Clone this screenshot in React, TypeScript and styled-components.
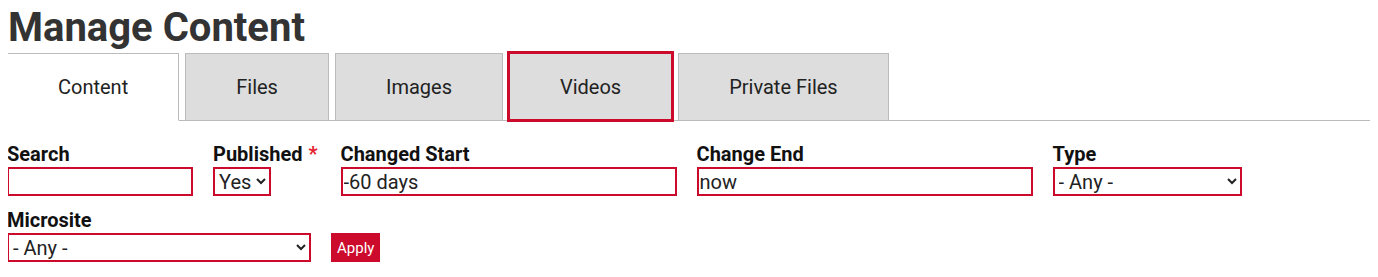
import React from "react";
import styled, { createGlobalStyle } from "styled-components";

const RED = "#cc0a2c";

const Global = createGlobalStyle`
  body {
    margin: 8px;
    background: #fff;
    font-family: Roboto, "Liberation Sans", Arial, sans-serif;
    color: #111;
  }
`;

const Title = styled.h1`
  margin: 0 0 5px;
  font-size: 40px;
  line-height: 40px;
  font-weight: 700;
  color: #333;
`;

const TabList = styled.ul`
  display: flex;
  gap: 6px;
  list-style: none;
  margin: 0 0 0 -1px;
  padding: 0;
  border-bottom: 1px solid #bbb;
`;

const TabItem = styled.li<{ $active?: boolean }>`
  margin-bottom: ${(p) => (p.$active ? "-1px" : "0")};
`;

const TabLink = styled.a<{ $active?: boolean; $focused?: boolean }>`
  display: flex;
  align-items: center;
  box-sizing: border-box;
  height: ${(p) => (p.$active ? "68px" : "67px")};
  padding: 0 50px;
  border: 1px solid #bbb;
  border-bottom: ${(p) => (p.$active ? "1px solid #fff" : "none")};
  background: ${(p) => (p.$active ? "#fff" : "#ddd")};
  color: #222;
  font-size: 20px;
  text-decoration: none;
  outline: ${(p) => (p.$focused ? `3px solid ${RED}` : "none")};
  outline-offset: -1px;
`;

const Form = styled.form`
  margin-top: 22px;
`;

const Row = styled.div`
  display: flex;
  align-items: flex-end;
  gap: 20px;
  & + & {
    margin-top: 13px;
  }
`;

const Field = styled.div`
  display: flex;
  flex-direction: column;
  margin-left: -1px;
  & + & {
    margin-left: 0;
  }
`;

const Label = styled.label`
  display: block;
  font-size: 20px;
  line-height: 23px;
  font-weight: 700;
  color: #111;
  margin-bottom: 1px;
  white-space: nowrap;
`;

const Required = styled.span`
  color: #e4202c;
  font-weight: 700;
  margin: 0 3px 0 6px;
`;

const TextInput = styled.input<{ $w: number }>`
  box-sizing: border-box;
  width: ${(p) => p.$w}px;
  height: 29px;
  border: 2px solid ${RED};
  border-radius: 0;
  padding: 0 1px;
  font-family: Roboto, "Liberation Sans", Arial, sans-serif;
  font-size: 20px;
  color: #222;
  background: #fff;
  outline: none;
`;

const Select = styled.select<{ $w: number }>`
  box-sizing: border-box;
  width: ${(p) => p.$w}px;
  height: 29px;
  border: 2px solid ${RED};
  border-radius: 0;
  padding: 0;
  font-family: Roboto, "Liberation Sans", Arial, sans-serif;
  font-size: 20px;
  color: #222;
  background: #fff;
  outline: none;
`;

const ApplyButton = styled.button`
  box-sizing: border-box;
  height: 29px;
  padding: 0 6px;
  border: none;
  border-radius: 0;
  background: ${RED};
  color: #fff;
  font-family: Roboto, "Liberation Sans", Arial, sans-serif;
  font-size: 15px;
  cursor: pointer;
`;

const tabs = [
  { label: "Content", active: true },
  { label: "Files" },
  { label: "Images" },
  { label: "Videos", focused: true },
  { label: "Private Files" },
];

export default function App() {
  return (
    <>
      <Global />
      <Title>Manage Content</Title>
      <TabList>
        {tabs.map((t) => (
          <TabItem key={t.label} $active={t.active}>
            <TabLink href="#" $active={t.active} $focused={t.focused}>
              {t.label}
            </TabLink>
          </TabItem>
        ))}
      </TabList>
      <Form onSubmit={(e) => e.preventDefault()}>
        <Row>
          <Field>
            <Label>Search</Label>
            <TextInput $w={186} defaultValue="" />
          </Field>
          <Field>
            <Label>
              Published<Required>*</Required>
            </Label>
            <Select $w={58} defaultValue="Yes">
              <option>Yes</option>
              <option>No</option>
            </Select>
          </Field>
          <Field>
            <Label>Changed Start</Label>
            <TextInput $w={336} defaultValue="-60 days" />
          </Field>
          <Field>
            <Label>Change End</Label>
            <TextInput $w={336} defaultValue="now" />
          </Field>
          <Field>
            <Label>Type</Label>
            <Select $w={189} defaultValue="- Any -">
              <option>- Any -</option>
            </Select>
          </Field>
        </Row>
        <Row>
          <Field>
            <Label>Microsite</Label>
            <Select $w={304} defaultValue="- Any -">
              <option>- Any -</option>
            </Select>
          </Field>
          <ApplyButton type="submit">Apply</ApplyButton>
        </Row>
      </Form>
    </>
  );
}
